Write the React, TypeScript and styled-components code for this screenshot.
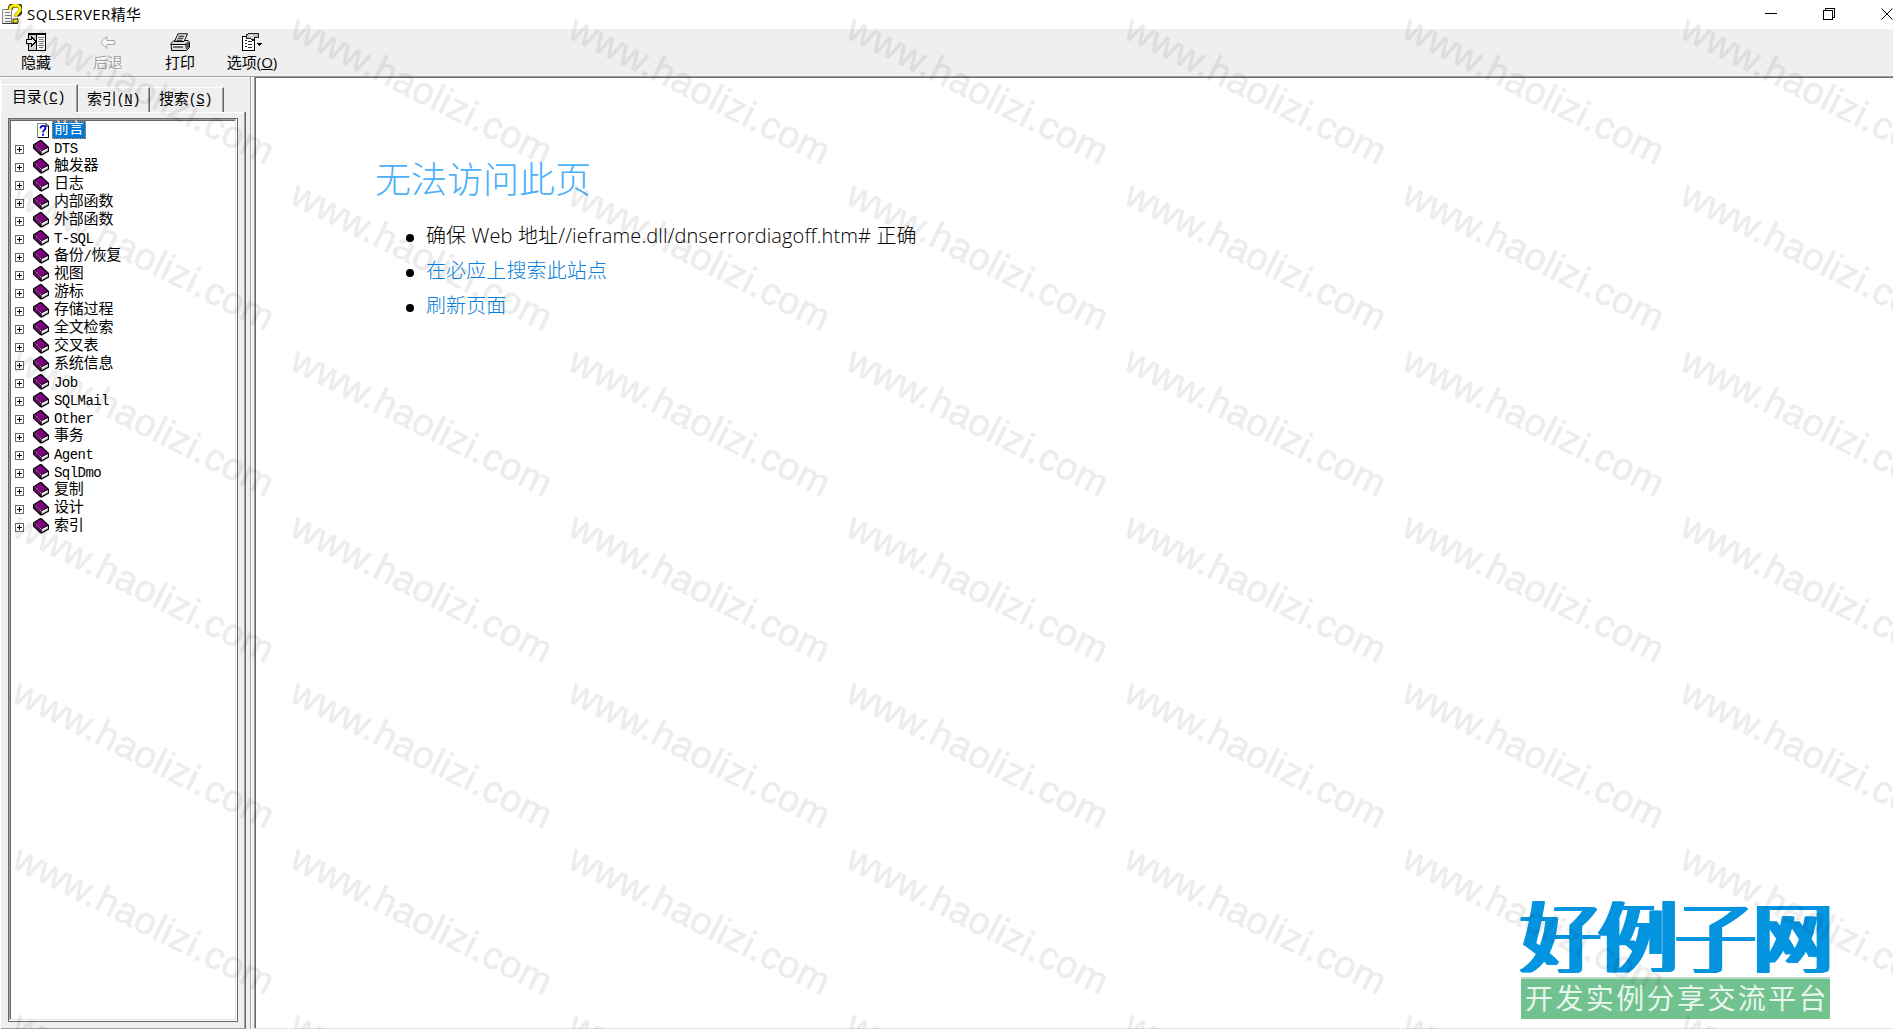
import React from 'react';
import styled, { createGlobalStyle } from 'styled-components';

const Global = createGlobalStyle`
  * { box-sizing: border-box; }
  html, body { margin: 0; padding: 0; }
  body { background: #fff; overflow: hidden; color: #000; }
  svg { display: block; flex: none; }
`;

const ui = `"Open Sans", "Noto Sans CJK SC", sans-serif`;
const song = `"Liberation Mono", "Noto Sans CJK SC", monospace`;

const Window = styled.div`
  position: relative;
  width: 1893px;
  height: 1029px;
  display: flex;
  flex-direction: column;
  overflow: hidden;
  background: #fff;
  font-family: ${ui};
`;

const TitleBar = styled.header`
  height: 29px;
  flex: none;
  display: flex;
  align-items: center;
  padding-left: 2px;
`;
const Title = styled.div`
  margin-left: 5px;
  flex: 1;
  font-size: 15px;
  line-height: 26px;
  padding-bottom: 2px;
  letter-spacing: 0.4px;
`;
const Controls = styled.div`
  display: flex;
  gap: 46px;
  width: 128px;
  overflow: hidden;
`;

const ToolBar = styled.nav`
  height: 47px;
  flex: none;
  display: flex;
  padding: 4px 0 0;
  background: #efefef;
`;
const Tool = styled.div<{ $disabled?: boolean }>`
  width: 72px;
  display: flex;
  flex-direction: column;
  align-items: center;
  color: ${p => (p.$disabled ? '#a3a3a3' : '#000')};
  text-shadow: ${p => (p.$disabled ? '1px 1px 0 #fff' : 'none')};
  font-size: 15px;
  line-height: 23px;
  white-space: nowrap;
`;

const Body = styled.div`
  flex: 1;
  min-height: 0;
  display: flex;
`;
const Side = styled.aside`
  width: 250px;
  flex: none;
  padding: 7px 4px 0 1px;
  display: flex;
  flex-direction: column;
  background: #efefef;
  border-top: 1px solid #a0a0a0;
  box-shadow: inset 0 1px #fff, inset 1px 0 #fff;
`;
const Tabs = styled.div`
  height: 28px;
  flex: none;
  display: flex;
  align-items: flex-end;
`;
const Tab = styled.div<{ $w: number; $active?: boolean }>`
  width: ${p => p.$w}px;
  height: ${p => (p.$active ? 28 : 25)}px;
  border-top: 1px solid #fff;
  border-left: ${p => (p.$active ? 1 : 0)}px solid #fff;
  border-right: 1px solid #696969;
  box-shadow: inset -1px 0 #a0a0a0;
  padding-left: ${p => (p.$active ? 10 : 9)}px;
  font: 15px/${p => (p.$active ? 26 : 25)}px ${song};
  letter-spacing: -0.3px;
  white-space: nowrap;
`;
const Panel = styled.div`
  flex: 1;
  min-height: 0;
  padding: 6px 7px 6px;
  border: solid;
  border-width: 0 1px 1px 0;
  border-color: #696969 #696969 #a0a0a0;
  box-shadow: inset -1px 0 #a0a0a0;
  background: linear-gradient(#fff, #fff) 76px 0 / 100% 1px no-repeat;
`;
const Sunken = styled.div`
  height: 100%;
  border: 1px solid #696969;
  background: #fff;
  padding: 0 1px 1px 0;
`;
const Groove = styled.div`
  height: 100%;
  border: 1px solid;
  border-color: #a0a0a0 #e3e3e3 #e3e3e3 #a0a0a0;
`;
const Tree = styled.ul`
  height: 100%;
  margin: 0;
  padding: 0;
  list-style: none;
  border: solid #696969;
  border-width: 1px 0 0 1px;
`;
const Node = styled.li`
  height: 18px;
  display: flex;
  align-items: center;
  padding-left: 4px;
`;
const BookSlot = styled.span`
  margin: 0 5px 0 9px;
  display: flex;
`;
const PageSlot = styled.span`
  margin: 0 3px 0 22px;
  display: flex;
`;
const Label = styled.span<{ $selected?: boolean }>`
  height: 18px;
  display: inline-flex;
  align-items: center;
  font-family: ${song};
  font-size: 15px;
  line-height: 16px;
  padding-top: ${p => (p.$selected ? 0 : 1)}px;
  letter-spacing: -0.2px;
  white-space: nowrap;
  ${p => p.$selected && `
    padding: 0 1px;
    color: #fff;
    background: #0078d7;
    border: 1px dotted #ff8728;
  `}
`;
const Latin = styled.span`
  font-size: 14px;
  letter-spacing: -0.55px;
`;

const Splitter = styled.div`
  width: 4px;
  flex: none;
  background: #efefef;
  border-left: 1px solid #a0a0a0;
  border-top: 1px solid #a0a0a0;
  box-shadow: inset 1px 1px #fff;
`;
const Page = styled.main`
  flex: 1;
  padding: 79px 0 0 120px;
  border-top: 1px solid #a0a0a0;
  border-left: 1px solid #a0a0a0;
  border-bottom: 1px solid #e3e3e3;
  box-shadow: inset 1px 1px #696969;
  font-family: "Open Sans", "Noto Sans CJK SC", sans-serif;
  font-weight: 300;
`;
const Heading = styled.h1`
  margin: 0;
  font-size: 36px;
  line-height: 48px;
  font-weight: 300;
  color: #4ab0fa;
`;
const List = styled.ul`
  margin: 14px 0 0;
  padding: 0 0 0 31px;
  list-style: none;
`;
const Item = styled.li<{ $link?: boolean }>`
  height: 35px;
  display: flex;
  align-items: center;
  gap: 12px;
  font-size: 20px;
  line-height: 35px;
  letter-spacing: 0.12px;
  white-space: nowrap;
  color: ${p => (p.$link ? '#0a7edb' : '#000')};
  &::before {
    content: '';
    width: 8px;
    height: 8px;
    margin-top: 5px;
    border-radius: 50%;
    background: #000;
  }
`;

const Logo = styled.div`
  position: absolute;
  left: 1521px;
  top: 896px;
  width: 309px;
`;
const LogoName = styled.div`
  height: 81px;
  font: 300 78px/74px "Noto Sans CJK SC", sans-serif;
  letter-spacing: -0.5px;
  color: #0494e0;
  white-space: nowrap;
  text-shadow: 1px 0, -1px 0, 2px 0, -2px 0, 3px 0, -3px 0, 4px 0, -4px 0, 5px 0;
`;
const LogoLine = styled.div`
  height: 42px;
  border-top: 2px solid #c0d8ca;
  background: #72c290;
  color: #e8f6ee;
  padding-left: 4px;
  font: 400 28px/36px "Noto Sans CJK SC", sans-serif;
  letter-spacing: 2.4px;
  white-space: nowrap;
`;

const Marks = styled.div`
  position: absolute;
  left: 14px;
  top: 16px;
  display: grid;
  grid-template-columns: repeat(7, 278px);
  grid-auto-rows: 166px;
  pointer-events: none;
`;
const Mark = styled.span`
  font: 38px/36px "Liberation Sans", Arial, sans-serif;
  letter-spacing: 0.4px;
  white-space: nowrap;
  color: #000;
  -webkit-text-stroke: 0.5px #000;
  opacity: 0.07;
  transform-origin: 0 29px;
  transform: translate(-3px, -10px) rotate(26.7deg);
`;

const HelpIcon = () => (
  <svg width="20" height="21" viewBox="0 0 20 21">
    <path d="M.5 5.500h9v14h-9z" fill="#f5f5f5" stroke="#888" />
    <path d="M.5 19.500h15V14" stroke="#333" fill="none" />
    <path d="M3 8.500h5M3 11.500h6M3 14.500h7M3 17.500h6" stroke="#777" />
    <path d="M8 6c0-4 2.500-5 5.500-5s5.500 1.500 5.500 4.500c0 4-4.500 4-4.500 7" fill="none" stroke="#222" strokeWidth="5" />
    <path d="M8 6c0-3.500 2.500-4.500 5-4.500s5 1 5 4-4.500 4-4.500 7" fill="none" stroke="#f7ea00" strokeWidth="3.200" />
    <path d="M11 15h5v4h-5z" fill="#f7ea00" stroke="#222" />
  </svg>
);

const HideIcon = () => (
  <svg width="20" height="18" viewBox="0 0 20 18" shapeRendering="crispEdges">
    <path d="M2.500 .5h17v17h-17z" fill="#fff" stroke="#000" />
    <path d="M2 1.500h18" stroke="#000" />
    <path d="M3 2h7v15H3z" fill="#d0d0d0" />
    <path d="M10.500 2v16" stroke="#000" />
    <path d="M12 4.500h6M13 6.500h4M12 8.500h6M13 10.500h4M12 12.500h6M13 14.500h4" stroke="#777" />
    <path d="M0 6.500h5v-3l5 5-5 5v-3H0z" fill="#fff" stroke="#000" />
  </svg>
);
const BackIcon = () => (
  <svg width="16" height="18" viewBox="0 0 16 18">
    <path d="M.8 9.500l6-6v4h8v4h-8v4z" fill="#f7f7f7" stroke="#a5a5a5" />
  </svg>
);
const PrintIcon = () => (
  <svg width="20" height="18" viewBox="0 0 20 18">
    <path d="M1 10.500l3-3h14l1.500 2v5l-3 3h-15z" fill="#ddd" stroke="#000" />
    <path d="M15 11l4-3v6l-3 3z" fill="#555" />
    <path d="M4.500 8.500L8 .8h9.500l-3.500 7.700z" fill="#fff" stroke="#000" />
    <path d="M8.500 3.200h6M7.500 5.200h6M6.500 7.200h6" stroke="#000" />
    <path d="M1 11.500h15M3 14h10" stroke="#000" />
    <path d="M2 12.500h13" stroke="#fff" />
  </svg>
);
const OptionsIcon = () => (
  <svg width="20" height="18" viewBox="0 0 20 18" shapeRendering="crispEdges">
    <path d="M.5 3.500h12v14H.5z" fill="#fff" stroke="#000" />
    <path d="M3 7.500h2M3 10.500h2M3 13.500h2M6 8.500h4M6 11.500h4M6 14.500h4" stroke="#333" />
    <path d="M4 2.500L6.500 .5H16v4h-3l-2 3-3-2.500H4z" fill="#bbb" stroke="#222" />
    <path d="M7 2h4M9 4h3" stroke="#fff" />
    <path d="M15 10h5l-2.500 3z" fill="#000" />
  </svg>
);
const PlusBox = () => (
  <svg width="9" height="9" viewBox="0 0 9 9" shapeRendering="crispEdges">
    <path d="M.5 .5h8v8h-8z" fill="#fff" stroke="#696969" />
    <path d="M2 4.500h5M4.500 2v5" stroke="#000" />
  </svg>
);
const PlusSlot = styled.span`
  padding-top: 2px;
`;
const Book = () => (
  <svg width="16" height="16" viewBox="0 0 16 16">
    <path d="M0 4.500L7 0h1.500L16 7v4.500L9 15.500H7.500L0 8.500z" fill="#000" />
    <path d="M8.500 11.300L15 8l-.3 2.800L8.800 14z" fill="#fff" />
    <path d="M9.500 13l5-2.700" stroke="#999" strokeWidth=".7" />
    <path d="M2 4.500L7.500 1l7 6L8 10.500z" fill="#800080" />
    <path d="M1 6l6.500 5.500v2.300L1 8.200z" fill="#800080" />
    <path d="M1.500 5L8 11" stroke="#fff" strokeWidth=".9" strokeDasharray="1.200 .7" />
  </svg>
);
const HelpPage = () => (
  <svg width="12" height="15" viewBox="0 0 12 15">
    <path d="M.5 .5h8.500l2.500 2.500v11.500H.5z" fill="#fff" stroke="#888" />
    <path d="M11.500 3v11.500H1M9 .5V3h3" stroke="#000" fill="none" />
    <path d="M2 3h2v2H2zM8 8h2v2H8zM2 8h2v2H2z" fill="#ffff80" />
    <path d="M3.500 5.500C3.500 2 8.500 2 8.500 5c0 2-2.500 2-2.500 4.500M6 10.800v2" stroke="#0000d8" strokeWidth="1.800" fill="none" />
  </svg>
);

const topics = [
  'DTS', '触发器', '日志', '内部函数', '外部函数', 'T-SQL', '备份/恢复', '视图',
  '游标', '存储过程', '全文检索', '交叉表', '系统信息', 'Job', 'SQLMail', 'Other',
  '事务', 'Agent', 'SqlDmo', '复制', '设计', '索引',
];

const MixedText = ({ text }: { text: string }) => (
  <>
    {text.split(/([\x21-\x7e]+)/).filter(Boolean).map((part, i) =>
      /^[\x21-\x7e]/.test(part) ? <Latin key={i}>{part}</Latin> : <span key={i}>{part}</span>
    )}
  </>
);

export default function App() {
  return (
    <>
      <Global />
      <Window>
        <TitleBar>
          <HelpIcon />
          <Title>SQLSERVER精华</Title>
          <Controls>
            <svg width="12" height="13" viewBox="0 0 12 13" shapeRendering="crispEdges">
              <path d="M0 5.500h12" stroke="#000" />
            </svg>
            <svg width="12" height="13" viewBox="0 0 12 13" shapeRendering="crispEdges" fill="none" stroke="#000">
              <path d="M.5 2.500h9v9h-9zM2.500 2V.5h9v9H10" />
            </svg>
            <svg width="13" height="13" viewBox="0 0 13 13" stroke="#000">
              <path d="M.5 .5l11 11M11.500 .5l-11 11" />
            </svg>
          </Controls>
        </TitleBar>
        <ToolBar>
          <Tool><HideIcon />隐藏</Tool>
          <Tool $disabled><BackIcon />后退</Tool>
          <Tool><PrintIcon />打印</Tool>
          <Tool><OptionsIcon /><span>选项(<u>O</u>)</span></Tool>
        </ToolBar>
        <Body>
          <Side>
            <Tabs>
              <Tab $w={77} $active>目录<Latin>(<u>C</u>)</Latin></Tab>
              <Tab $w={72}>索引<Latin>(<u>N</u>)</Latin></Tab>
              <Tab $w={74}>搜索<Latin>(<u>S</u>)</Latin></Tab>
            </Tabs>
            <Panel>
              <Sunken>
                <Groove>
                  <Tree>
                    <Node>
                      <PageSlot><HelpPage /></PageSlot>
                      <Label $selected>前言</Label>
                    </Node>
                    {topics.map(t => (
                      <Node key={t}>
                        <PlusSlot><PlusBox /></PlusSlot>
                        <BookSlot><Book /></BookSlot>
                        <Label><MixedText text={t} /></Label>
                      </Node>
                    ))}
                  </Tree>
                </Groove>
              </Sunken>
            </Panel>
          </Side>
          <Splitter />
          <Page>
            <Heading>无法访问此页</Heading>
            <List>
              <Item>确保 Web 地址//ieframe.dll/dnserrordiagoff.htm# 正确</Item>
              <Item $link>在必应上搜索此站点</Item>
              <Item $link>刷新页面</Item>
            </List>
          </Page>
        </Body>
        <Logo>
          <LogoName>好例子网</LogoName>
          <LogoLine>开发实例分享交流平台</LogoLine>
        </Logo>
        <Marks>
          {Array.from({ length: 49 }, (_, i) => <Mark key={i}>www.haolizi.com</Mark>)}
        </Marks>
      </Window>
    </>
  );
}
